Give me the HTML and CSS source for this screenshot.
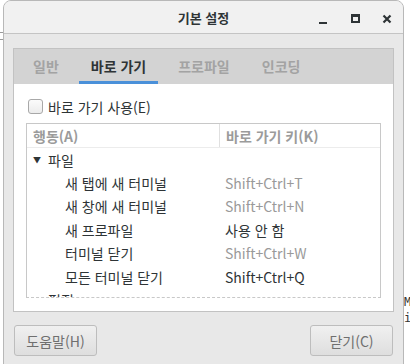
FILE: index.html
```html
<!DOCTYPE html>
<html lang="ko">
<head>
<meta charset="utf-8">
<link rel="stylesheet" href="styles.css">
</head>
<body>
<div class="desktop">
  <div class="bg-left"></div>
  <div class="bg-right">M<br>i</div>
  <div class="window">
    <div class="titlebar">
      <span class="title">기본 설정</span>
      <div class="controls">
        <span class="ctl min"></span>
        <span class="ctl max"></span>
        <svg class="ctl close" width="10" height="10" viewBox="0 0 10 10"><path d="M1.5 1.5 L8.5 8.5 M8.5 1.5 L1.5 8.5" stroke="#2e3436" stroke-width="2.2"/></svg>
      </div>
    </div>
    <div class="body">
      <div class="notebook">
        <div class="tabs">
          <div class="tab">일반</div>
          <div class="tab active">바로 가기</div>
          <div class="tab">프로파일</div>
          <div class="tab">인코딩</div>
        </div>
        <div class="page">
          <label class="check"><span class="box"></span><span>바로 가기 사용(E)</span></label>
          <div class="tree">
            <div class="thead">
              <div class="col1">행동(A)</div>
              <div class="col2">바로 가기 키(K)</div>
            </div>
            <div class="row group"><span class="arrow">▼</span>파일</div>
            <div class="row"><span class="c1">새 탭에 새 터미널</span><span class="c2 dim">Shift+Ctrl+T</span></div>
            <div class="row"><span class="c1">새 창에 새 터미널</span><span class="c2 dim">Shift+Ctrl+N</span></div>
            <div class="row"><span class="c1">새 프로파일</span><span class="c2">사용 안 함</span></div>
            <div class="row"><span class="c1">터미널 닫기</span><span class="c2 dim">Shift+Ctrl+W</span></div>
            <div class="row"><span class="c1">모든 터미널 닫기</span><span class="c2">Shift+Ctrl+Q</span></div>
            <div class="row group"><span class="arrow">▼</span>편집</div>
          </div>
        </div>
      </div>
      <div class="footer">
        <button class="btn">도움말(H)</button>
        <button class="btn">닫기(C)</button>
      </div>
    </div>
  </div>
</div>
</body>
</html>
```
FILE: styles.css
```css
html, body {
  margin: 0;
  padding: 0;
  background: #ffffff;
  overflow: hidden;
}
body {
  font-family: "Noto Sans CJK KR", "Noto Sans", sans-serif;
  font-size: 14px;
  color: #2e3436;
}
.desktop {
  position: relative;
  width: 410px;
  height: 364px;
  overflow: hidden;
}
.bg-left {
  position: absolute;
  left: 0;
  top: 32px;
  width: 3px;
  height: 6px;
  border-top: 1px solid #9a9a9a;
  border-bottom: 1px solid #9a9a9a;
}
.bg-right {
  position: absolute;
  left: 404px;
  top: 294px;
  font-family: "DejaVu Sans Mono", monospace;
  font-size: 12px;
  line-height: 16px;
  color: #333;
}
.window {
  position: absolute;
  left: 3px;
  top: 0;
  width: 399px;
  height: 380px;
  border: 1px solid #b8b8b8;
  border-radius: 8px 8px 0 0;
  background: #e8e8e8;
  overflow: hidden;
}
.titlebar {
  position: relative;
  height: 32px;
  background: #f1f1f1;
  border-bottom: 1px solid #c4c4c4;
  display: flex;
  align-items: center;
  justify-content: center;
}
.title {
  font-weight: bold;
  font-size: 13px;
  color: #2e3436;
  margin-top: 1px;
}
.controls {
  position: absolute;
  right: 11px;
  top: 12px;
  display: flex;
  align-items: center;
  gap: 22px;
}
.ctl {
  display: block;
}
.min {
  width: 8px;
  height: 9px;
  border-bottom: 2px solid #2e3436;
  margin-right: 2px;
}
.max {
  width: 5px;
  height: 4px;
  border: 2px solid #2e3436;
  border-top-width: 3px;
}
.body {
  padding: 14px 9px 0 9px;
}
.notebook {
  border: 1px solid #c2c2c2;
  background: #ffffff;
}
.tabs {
  height: 35px;
  background: #d3d3d3;
  display: flex;
  padding-left: 7px;
  gap: 8px;
}
.tab {
  padding: 2px 12px 0 12px;
  display: flex;
  align-items: center;
  color: #a3a3a3;
  font-weight: bold;
  font-size: 14px;
  border-bottom: 3px solid transparent;
  box-sizing: border-box;
}
.tab.active {
  color: #2e3436;
  border-bottom-color: #4a90d9;
}
.page {
  height: 227px;
  padding: 14px 12px 0 12px;
  box-sizing: border-box;
}
.check {
  display: flex;
  align-items: center;
  gap: 5px;
  margin-left: 2px;
  height: 17px;
  color: #2e3436;
}
.box {
  width: 13px;
  height: 13px;
  border: 1px solid #a8a8a8;
  border-radius: 3px;
  background: linear-gradient(#fbfbfb, #ececec);
}
.tree {
  margin-top: 8px;
  height: 175px;
  border: 1px solid #c8c8c8;
  border-bottom: 1px dashed #c8c8c8;
  box-sizing: border-box;
  overflow: hidden;
}
.thead {
  height: 24px;
  display: flex;
  border-bottom: 1px solid #ececec;
  box-sizing: border-box;
  color: #9b9b9b;
  font-weight: bold;
}
.thead .col1 {
  width: 193px;
  box-sizing: border-box;
  padding-left: 6px;
  border-right: 1px solid #e0e0e0;
  display: flex;
  align-items: center;
}
.thead .col2 {
  padding-left: 6px;
  display: flex;
  align-items: center;
}
.row {
  height: 23.4px;
  display: flex;
  align-items: center;
  color: #2e3436;
}
.row.group {
  padding-left: 6px;
}
.arrow {
  font-size: 8px;
  width: 15px;
  color: #2e3436;
}
.c1 {
  width: 160px;
  padding-left: 38px;
}
.c2.dim {
  color: #9a9a9a;
}
.footer {
  display: flex;
  justify-content: space-between;
  padding: 13px 1px 0 1px;
}
.btn {
  width: 83px;
  height: 31px;
  border: 1px solid #bdbdbd;
  border-radius: 3px;
  background: linear-gradient(#f0f0f0, #dedede);
  font-family: "Noto Sans CJK KR", "Noto Sans", sans-serif;
  font-size: 14px;
  color: #6f6f6f;
  padding: 0;
}
```
